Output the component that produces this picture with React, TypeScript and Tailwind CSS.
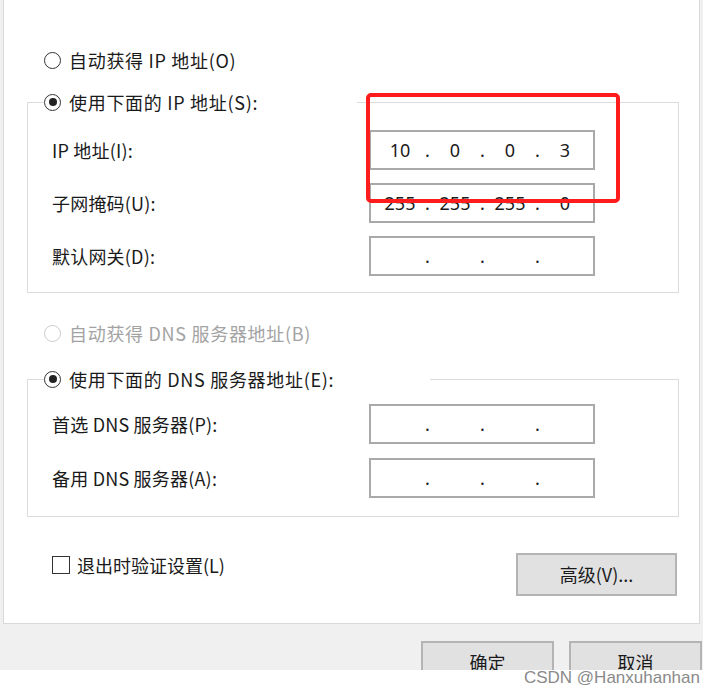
import React from 'react'

const cjk = "font-['Noto_Sans_CJK_SC','Noto_Sans',sans-serif]"

function Radio({ checked = false, disabled = false }: { checked?: boolean; disabled?: boolean }) {
  return (
    <span
      className={
        'flex h-[17px] w-[17px] shrink-0 items-center justify-center rounded-full border-[1.5px] bg-white ' +
        (disabled ? 'border-[#cccccc]' : 'border-[#333333]')
      }
    >
      {checked && <span className="h-[8px] w-[8px] rounded-full bg-[#222222]" />}
    </span>
  )
}

function IpBox({ parts }: { parts: string[] }) {
  return (
    <div className="flex h-[40px] w-[226px] items-center border-2 border-[#a9a9a9] bg-white pl-[9px] text-[18px] leading-none text-[#1a1a1a] font-['Noto_Sans','Liberation_Sans',sans-serif]">
      {parts.map((p, i) => (
        <React.Fragment key={i}>
          <span className="w-[40px] text-center">{p}</span>
          {i < 3 && <span className="w-[15px] text-center">.</span>}
        </React.Fragment>
      ))}
    </div>
  )
}

function Row({ label, parts }: { label: string; parts: string[] }) {
  return (
    <div className="flex items-center">
      <span className="w-[341px] pl-[24px] text-[18px] leading-[24px] tracking-[0.2px] text-[#1a1a1a]">{label}</span>
      <IpBox parts={parts} />
    </div>
  )
}

export default function App() {
  const empty = ['', '', '', '']
  return (
    <div className={'relative h-[691px] w-[713px] overflow-hidden bg-white ' + cjk}>
      <div className="w-[703px] bg-[#f0f0f0]">
        {/* white property page */}
        <div className="relative ml-[3px] flex w-[697px] flex-col border-x border-b border-[#d9d9d9] bg-white pt-[48px] pb-[27px]">
          <div className="ml-[40px] flex h-[24px] items-center gap-[8px] text-[18px] tracking-[0.7px] text-[#1a1a1a]">
            <Radio />
            <span>自动获得 IP 地址(O)</span>
          </div>

          <fieldset className="mt-[18px] ml-[23px] w-[652px] border border-[#dcdcdc] pt-[16px] pb-[16px]">
            <legend className="ml-[16px] flex h-[24px] w-[313px] items-center gap-[8px] bg-white text-[18px] tracking-[0.7px] text-[#1a1a1a]">
              <Radio checked />
              <span>使用下面的 IP 地址(S):</span>
            </legend>
            <div className="flex flex-col gap-[13px]">
              <Row label="IP 地址(I):" parts={['10', '0', '0', '3']} />
              <Row label="子网掩码(U):" parts={['255', '255', '255', '0']} />
              <Row label="默认网关(D):" parts={empty} />
            </div>
          </fieldset>

          <div className="mt-[28px] ml-[40px] flex h-[24px] items-center gap-[8px] text-[18px] tracking-[0.7px] text-[#a3a3a3]">
            <Radio disabled />
            <span>自动获得 DNS 服务器地址(B)</span>
          </div>

          <fieldset className="mt-[22px] ml-[23px] w-[652px] border border-[#dcdcdc] pt-[13px] pb-[18px]">
            <legend className="ml-[16px] flex h-[24px] w-[386px] items-center gap-[8px] bg-white text-[18px] tracking-[0.7px] text-[#1a1a1a]">
              <Radio checked />
              <span>使用下面的 DNS 服务器地址(E):</span>
            </legend>
            <div className="flex flex-col gap-[14px]">
              <Row label="首选 DNS 服务器(P):" parts={empty} />
              <Row label="备用 DNS 服务器(A):" parts={empty} />
            </div>
          </fieldset>

          <div className="mt-[36px] flex items-start justify-between pl-[48px] pr-[22px]">
            <div className="flex h-[24px] items-center gap-[7px] text-[18px] text-[#1a1a1a]">
              <span className="h-[18px] w-[18px] border-[1.5px] border-[#333333] bg-white" />
              <span>退出时验证设置(L)</span>
            </div>
            <button className="h-[43px] w-[161px] border-2 border-[#b4b4b4] bg-[#e1e1e1] text-[18px] text-[#1a1a1a]">
              高级(V)...
            </button>
          </div>

          {/* red highlight */}
          <div className="absolute left-[362px] top-[93px] h-[110px] w-[254px] rounded-[5px] border-[4px] border-[#ff1c1c]" />
        </div>

        {/* bottom button bar */}
        <div className="flex h-[46px] justify-end gap-[15px] overflow-hidden pr-[1px] pt-[17px]">
          <button className="h-[43px] w-[133px] shrink-0 border-2 border-[#b4b4b4] bg-[#e1e1e1] text-[18px] text-[#1a1a1a]">
            确定
          </button>
          <button className="h-[43px] w-[133px] shrink-0 border-2 border-[#b4b4b4] bg-[#e1e1e1] text-[18px] text-[#1a1a1a]">
            取消
          </button>
        </div>
      </div>

      <span className="absolute bottom-[5px] right-[13px] text-[17px] leading-none text-[#8a8a8a] font-['Liberation_Sans',sans-serif]">
        CSDN @Hanxuhanhan
      </span>
    </div>
  )
}
